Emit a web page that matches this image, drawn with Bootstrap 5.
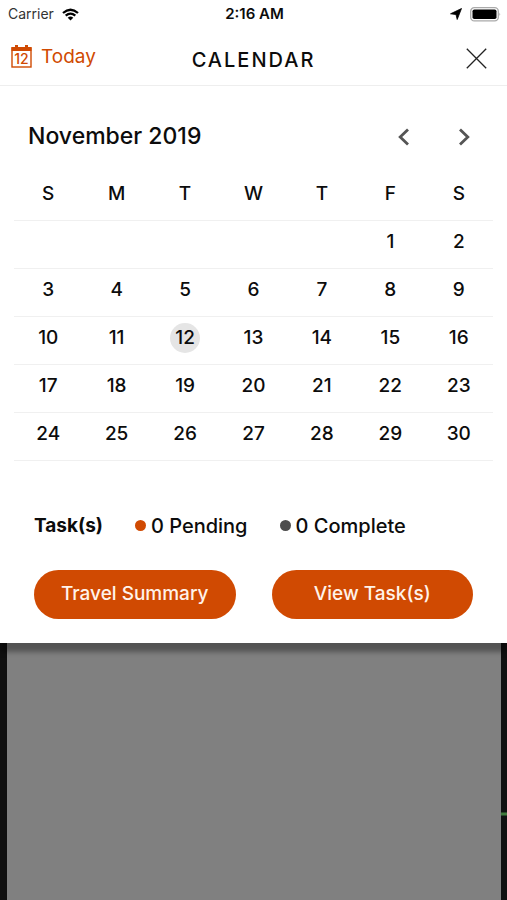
<!DOCTYPE html>
<html lang="en">
<head>
<meta charset="utf-8">
<meta name="viewport" content="width=device-width, initial-scale=1">
<title>Calendar</title>
<link href="https://cdn.jsdelivr.net/npm/bootstrap@5.3.0/dist/css/bootstrap.min.css" rel="stylesheet">
<style>
  :root { --brand: #d04a02; }
  body { font-family: Inter, "Liberation Sans", sans-serif; font-weight: 500; color: #0c0c0c; background: #101010; }
  svg { display: block; flex: none; }
  .sheet { background: #fff; box-shadow: 0 9px 5px rgba(0, 0, 0, .35); z-index: 1; }
  .equal { flex: 1 1 0; }
  .status { height: 28px; padding: 0 6px 0 8px; font-size: 14px; line-height: 28px; }
  .status .carrier { font-weight: 400; color: #333; }
  .status .clock { font-weight: 600; font-size: 15px; }
  .topbar { height: 58px; padding: 0 11px; border-bottom: 1px solid #eee; }
  .today { color: var(--brand); font-size: 19px; line-height: 24px; gap: 9px; padding-bottom: 4px; }
  .heading { font-size: 20px; line-height: 24px; font-weight: 500; letter-spacing: 2px; padding-top: 6px; }
  .plain { border: 0; background: none; padding: 0; }
  .close-btn { padding: 4px 9px 0; }
  .month { padding: 34px 31px 0 28px; height: 83px; }
  .month-name { font-size: 23px; line-height: 32px; font-weight: 500; }
  .month-nav { gap: 36px; height: 34px; }
  .month-nav button { width: 24px; height: 34px; display: flex; align-items: center; justify-content: center; }
  .calendar-wrap { padding: 0 14px; }
  .calendar { width: 100%; table-layout: fixed; text-align: center; font-size: 19px; line-height: 30px; }
  .calendar th { font-weight: 500; height: 51px; }
  .calendar td { height: 48px; padding: 0 0 4px; }
  .calendar tr { border-bottom: 1px solid #f0f0f0; }
  .selected-day { display: block; width: 30px; height: 30px; margin: 0 auto; border-radius: 50%; background: #e5e5e5; }
  .tasks { padding: 50px 34px 24px; font-size: 19px; line-height: 30px; }
  .summary { gap: 32px; margin-bottom: 29px; }
  .summary span { font-size: 20px; }
  .dot { width: 11px; height: 11px; border-radius: 50%; margin-right: 5px; }
  .dot-pending { background: var(--brand); }
  .dot-complete { background: #4d4d4d; }
  .actions { gap: 36px; }
  .btn-brand { --bs-btn-color: #fff3ea; --bs-btn-bg: var(--brand); --bs-btn-hover-color: #fff; --bs-btn-hover-bg: #b74000; height: 49px; font-size: 19px; font-weight: 500; }
  .backdrop-area { padding: 0 6px 0 7px; }
  .dimmed { background: #808080; }
  .edge-line { position: absolute; right: 0; top: 812px; width: 6px; height: 4px; background: #417a3c; border: solid #294727; border-width: 1px 0; }
</style>
<script src="https://cdn.jsdelivr.net/npm/bootstrap@5.3.0/dist/js/bootstrap.bundle.min.js"></script>
</head>
<body class="d-flex flex-column min-vh-100 position-relative">
<main class="sheet position-relative">
  <div class="status d-flex align-items-center">
    <div class="equal d-flex align-items-center gap-2">
      <span class="carrier">Carrier</span>
      <svg width="17" height="13" viewBox="0 0 17 13" fill="none" stroke="#000" stroke-width="2.3" aria-label="Wi-Fi"><path d="M1 5Q8.500-1.600 16 5M3.700 7.700Q8.500 3.500 13.300 7.700"/><path d="M8.500 12.500 5.700 9.700Q8.500 7.500 11.300 9.700Z" fill="#000" stroke="none"/></svg>
    </div>
    <span class="clock">2:16 AM</span>
    <div class="equal d-flex align-items-center justify-content-end gap-2">
      <svg width="12" height="12" viewBox="0 0 12 12" aria-label="Location"><path d="M11.500.5 7.200 11.500 6 6.600 .5 5.800Z" stroke="#000" stroke-width=".8"/></svg>
      <svg width="31" height="15" viewBox="0 0 31 15" aria-label="Battery full"><rect x=".7" y=".7" width="27.600" height="13.200" rx="3.600" fill="#fff" stroke="#aaa" stroke-width="1.300"/><rect x="2.500" y="2.500" width="24" height="9.600" rx="1.800"/><path d="M29.500 5.500q1.500 1.800 0 3.600z" fill="#999"/></svg>
    </div>
  </div>

  <header class="topbar d-flex align-items-center">
    <div class="equal">
      <button class="plain today d-flex align-items-center" type="button">
        <svg width="21" height="23" viewBox="0 0 21 23" aria-hidden="true"><rect x="1" y="3" width="19" height="19" fill="none" stroke="#d04a02" stroke-width="1.400"/><path d="M.5 2h20v4H.5zM4 0h3v3H4zM14 0h3v3h-3z" fill="#d04a02"/><text x="10.500" y="19" text-anchor="middle" font-size="14" font-weight="500" fill="#d04a02">12</text></svg>
        Today
      </button>
    </div>
    <h1 class="heading mb-0">CALENDAR</h1>
    <div class="equal d-flex justify-content-end">
      <button class="plain close-btn" type="button" aria-label="Close">
        <svg width="21" height="21" viewBox="0 0 21 21" fill="none" stroke="#222" stroke-width="1.300"><path d="M.8.8 20.200 20.200M20.200.8.8 20.200"/></svg>
      </button>
    </div>
  </header>

  <div class="month d-flex justify-content-between">
    <h2 class="month-name mb-0">November 2019</h2>
    <div class="month-nav d-flex">
      <button class="plain" type="button" aria-label="Previous month"><svg width="12" height="18" viewBox="0 0 12 18" fill="none" stroke="#555" stroke-width="2.800"><path d="M10 1.500 2.200 9 10 16.500"/></svg></button>
      <button class="plain" type="button" aria-label="Next month"><svg width="12" height="18" viewBox="0 0 12 18" fill="none" stroke="#555" stroke-width="2.800"><path d="M2 1.500 9.800 9 2 16.500"/></svg></button>
    </div>
  </div>

  <div class="calendar-wrap">
    <table class="calendar">
      <thead><tr><th scope="col">S</th><th scope="col">M</th><th scope="col">T</th><th scope="col">W</th><th scope="col">T</th><th scope="col">F</th><th scope="col">S</th></tr></thead>
      <tbody>
        <tr><td></td><td></td><td></td><td></td><td></td><td>1</td><td>2</td></tr>
        <tr><td>3</td><td>4</td><td>5</td><td>6</td><td>7</td><td>8</td><td>9</td></tr>
        <tr><td>10</td><td>11</td><td><span class="selected-day">12</span></td><td>13</td><td>14</td><td>15</td><td>16</td></tr>
        <tr><td>17</td><td>18</td><td>19</td><td>20</td><td>21</td><td>22</td><td>23</td></tr>
        <tr><td>24</td><td>25</td><td>26</td><td>27</td><td>28</td><td>29</td><td>30</td></tr>
      </tbody>
    </table>
  </div>

  <section class="tasks">
    <div class="summary d-flex">
      <strong>Task(s)</strong>
      <span class="d-flex align-items-center"><span class="dot dot-pending"></span>0 Pending</span>
      <span class="d-flex align-items-center"><span class="dot dot-complete"></span>0 Complete</span>
    </div>
    <div class="actions d-flex">
      <button class="btn btn-brand rounded-pill equal px-0" type="button">Travel Summary</button>
      <button class="btn btn-brand rounded-pill equal px-0" type="button">View Task(s)</button>
    </div>
  </section>
</main>
<div class="backdrop-area flex-grow-1 d-flex"><div class="dimmed flex-grow-1"></div></div>
<span class="edge-line"></span>
</body>
</html>
